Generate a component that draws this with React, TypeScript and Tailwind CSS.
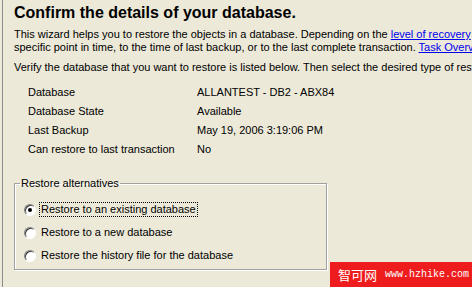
import { useState } from 'react';

const details = [
    { label: 'Database', value: 'ALLANTEST - DB2 - ABX84' },
    { label: 'Database State', value: 'Available' },
    { label: 'Last Backup', value: 'May 19, 2006 3:19:06 PM' },
    { label: 'Can restore to last transaction', value: 'No' },
];

const options = [
    'Restore to an existing database',
    'Restore to a new database',
    'Restore the history file for the database',
];

const Radio = ({ checked }: { checked: boolean }) => (
    <span className="relative w-[12px] h-[12px] rounded-full bg-white border border-t-[#808080] border-l-[#808080] border-b-white border-r-white shadow-[inset_1px_1px_0_#404040] flex items-center justify-center shrink-0">
        {checked && <span className="w-[4px] h-[4px] rounded-full bg-black" />}
    </span>
);

export default function App() {
    const [selected, setSelected] = useState(0);

    return (
        <div className="w-[472px] h-[287px] bg-[#ece9d8] relative overflow-hidden font-['Liberation_Sans',Arial,sans-serif] text-black">
            <div className="h-full ml-[2px] border-l border-[#8c8c8c] pl-[11px] pt-[2px]">
                <h1 className="text-[16px] font-bold leading-[21px] whitespace-nowrap">
                    Confirm the details of your database.
                </h1>

                <div className="text-[11px] leading-[13px] whitespace-nowrap mt-[5px]">
                    <p>
                        This wizard helps you to restore the objects in a database. Depending on the{' '}
                        <a className="text-[#0000ee] underline">level of recovery</a> you can restore
                    </p>
                    <p>
                        specific point in time, to the time of last backup, or to the last complete transaction.{' '}
                        <a className="text-[#0000ee] underline">Task Overview</a>
                    </p>
                    <p className="mt-[7px]">
                        Verify the database that you want to restore is listed below. Then select the desired type of restore.
                    </p>
                </div>

                <div className="mt-[9px] ml-[14px] text-[11px] leading-[13px]">
                    {details.map((d) => (
                        <div key={d.label} className="flex h-[19px] items-center">
                            <span className="w-[169px]">{d.label}</span>
                            <span>{d.value}</span>
                        </div>
                    ))}
                </div>

                <fieldset className="mt-[18px] w-[313px] h-[93px] border border-[#a0a0a0] shadow-[1px_1px_0_#ffffff,inset_1px_1px_0_#ffffff] px-[10px] pt-[4px] text-[11px] leading-[13px]">
                    <legend className="px-[1px] ml-[-5px]">Restore alternatives</legend>
                    <div className="flex flex-col gap-[10px] mt-[9px] ml-[-1px]">
                        {options.map((o, i) => (
                            <label
                                key={o}
                                onClick={() => setSelected(i)}
                                className="flex items-center gap-[4px] cursor-pointer"
                            >
                                <Radio checked={selected === i} />
                                <span className={selected === i ? 'outline outline-1 outline-dotted outline-black px-[1px]' : 'px-[1px]'}>
                                    {o}
                                </span>
                            </label>
                        ))}
                    </div>
                </fieldset>
            </div>

            <div className="absolute left-[330px] top-[262px] w-[142px] h-[25px] bg-[#ee1c1c] text-white flex items-center gap-[8px] pl-[8px] whitespace-nowrap">
                <span className="text-[13px] font-['Noto_Sans_CJK_SC',sans-serif] leading-none">智可网</span>
                <span className="text-[10px] font-['Liberation_Mono',monospace] leading-none">www.hzhike.com</span>
            </div>
        </div>
    );
}
